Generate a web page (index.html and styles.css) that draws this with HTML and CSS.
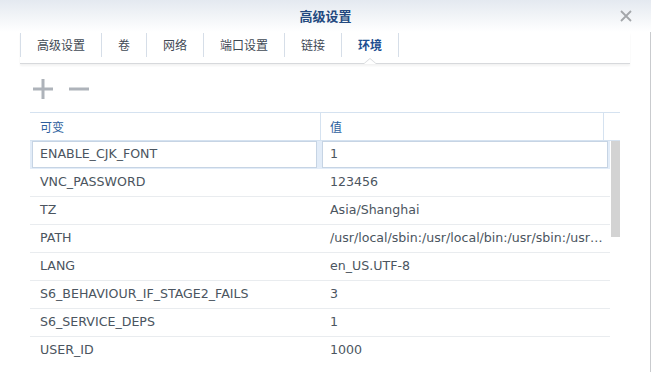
FILE: index.html
```html
<!DOCTYPE html>
<html lang="zh-CN">
<head>
    <meta charset="UTF-8">
    <title>高级设置</title>
    <link rel="stylesheet" href="styles.css">
</head>
<body>
<div class="window">
    <div class="titlebar">
        <span class="title">高级设置</span>
        <svg class="close" width="12" height="12" viewBox="0 0 12 12">
            <path d="M1 1 L11 11 M11 1 L1 11" stroke="#a3a6aa" stroke-width="1.8" fill="none"/>
        </svg>
    </div>

    <div class="content">
        <div class="tabs">
            <div class="tab">高级设置</div>
            <div class="tab">卷</div>
            <div class="tab">网络</div>
            <div class="tab">端口设置</div>
            <div class="tab">链接</div>
            <div class="tab active">环境</div>
        </div>

        <div class="toolbar">
            <svg class="tool" width="20" height="20" viewBox="0 0 20 20">
                <rect x="0" y="8.5" width="20" height="3" fill="#aeb3ba"/>
                <rect x="8.5" y="0" width="3" height="20" fill="#aeb3ba"/>
            </svg>
            <svg class="tool" width="20" height="20" viewBox="0 0 20 20">
                <rect x="0" y="8.5" width="20" height="3" fill="#aeb3ba"/>
            </svg>
        </div>

        <div class="grid">
            <div class="head">
                <div class="hcell">可变</div>
                <div class="hcell">值</div>
                <div class="hcell"></div>
            </div>
            <div class="body">
                <div class="rows">
                    <div class="row sel"><div class="cell">ENABLE_CJK_FONT</div><div class="cell">1</div></div>
                    <div class="row"><div class="cell">VNC_PASSWORD</div><div class="cell">123456</div></div>
                    <div class="row"><div class="cell">TZ</div><div class="cell">Asia/Shanghai</div></div>
                    <div class="row"><div class="cell">PATH</div><div class="cell">/usr/local/sbin:/usr/local/bin:/usr/sbin:/usr/bin:/sbin:/bin</div></div>
                    <div class="row"><div class="cell">LANG</div><div class="cell">en_US.UTF-8</div></div>
                    <div class="row"><div class="cell">S6_BEHAVIOUR_IF_STAGE2_FAILS</div><div class="cell">3</div></div>
                    <div class="row"><div class="cell">S6_SERVICE_DEPS</div><div class="cell">1</div></div>
                    <div class="row last"><div class="cell">USER_ID</div><div class="cell">1000</div></div>
                </div>
                <div class="scrollbar"><div class="thumb"></div></div>
            </div>
        </div>
    </div>
</div>
</body>
</html>
```

FILE: styles.css
```css
html, body { margin: 0; padding: 0; background: #fff; }
body { font-family: "DejaVu Sans", "Noto Sans CJK SC", sans-serif; font-size: 12.6px; color: #4b5560; }
.window { width: 651px; height: 372px; overflow: hidden; }

.titlebar { height: 32px; position: relative; text-align: center; background: linear-gradient(#e4e9f0, #ffffff); }
.title { line-height: 32px; font-family: "Noto Sans CJK SC", sans-serif; font-size: 13px; font-weight: bold; color: #23497f; }
.close { position: absolute; right: 19px; top: 10px; }

.content { border-right: 1px solid #c9cbce; height: 340px; }

.tabs { display: flex; margin: 0 20px; padding: 1px 0 6px; border-bottom: 1px solid #d7d9dc; box-shadow: 0 2px 2px rgba(0, 0, 0, 0.05); }
.tab { position: relative; height: 24px; line-height: 24px; padding: 0 16px; border-left: 1px solid #d6dee8; font-family: "Noto Sans CJK SC", sans-serif; font-size: 12px; color: #3f4954; }
.tab:last-child { border-right: 1px solid #d6dee8; }
.tab.active { color: #1d4f91; font-weight: 600; }
.tab.active:before { content: ""; position: absolute; left: 50%; bottom: -7px; margin-left: -7px; border: 7px solid transparent; border-top: 0; border-bottom: 6px solid #d7d9dc; }
.tab.active:after { content: ""; position: absolute; left: 50%; bottom: -7px; margin-left: -6px; border: 6px solid transparent; border-top: 0; border-bottom: 5px solid #fff; }

.toolbar { display: flex; gap: 16px; padding: 15px 0 0 33px; height: 33px; }
.tool { display: block; }

.grid { margin-left: 30px; width: 590px; }
.head { display: grid; grid-template-columns: 290px 283px 17px; height: 27px; border-top: 1px solid #d5e2f0; border-bottom: 1px solid #d5e2f0; }
.hcell { line-height: 27px; padding-left: 10px; font-family: "Noto Sans CJK SC", sans-serif; font-size: 12px; color: #2e5f9e; }
.hcell + .hcell { border-left: 1px solid #d5e2f0; padding-left: 9px; }

.body { display: flex; }
.rows { width: 580px; }
.row { display: grid; grid-template-columns: 290px 290px; height: 27px; border-bottom: 1px solid #e9ecef; }
.row.last { border-bottom: 0; }
.cell { line-height: 25px; padding: 0 6px 2px 10px; white-space: nowrap; overflow: hidden; text-overflow: ellipsis; }
.row.sel { background: #e2ecf8; border-bottom: 1px solid #e2ecf8; }
.row.sel .cell { background: #fff; border: 1px solid #c6d4e4; line-height: 24px; padding: 0 6px 1px 7px; margin: 0 2px; }
.row.sel .cell:first-child { margin-right: 3px; }

.scrollbar { width: 9px; margin-left: 1px; }
.thumb { height: 96px; background: #d3d3d3; }
```
